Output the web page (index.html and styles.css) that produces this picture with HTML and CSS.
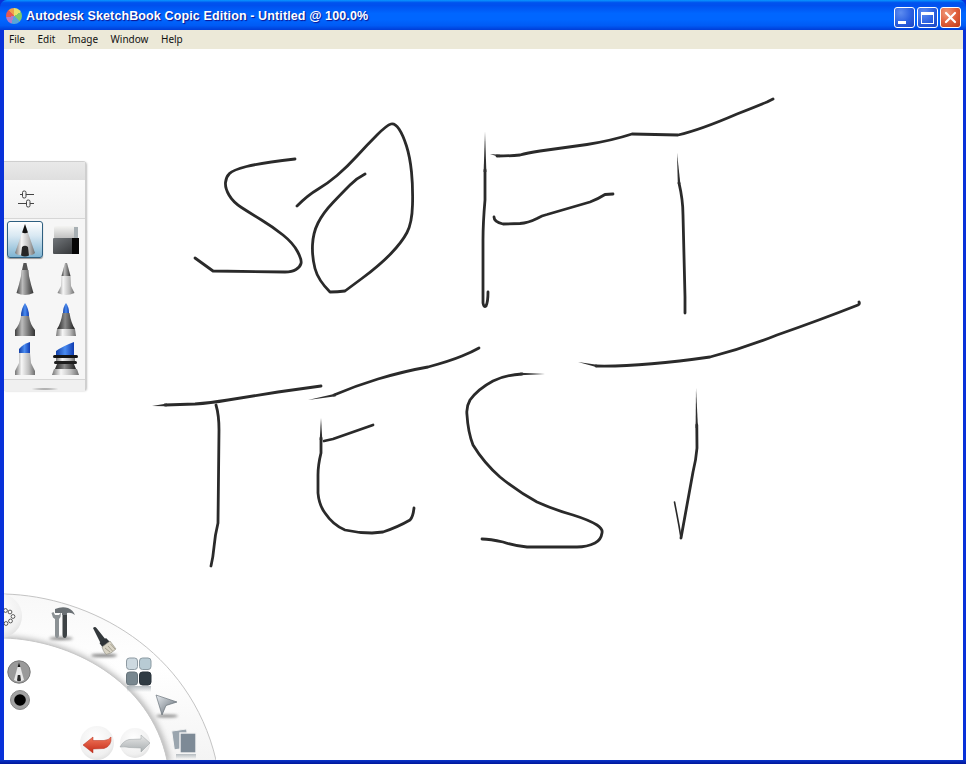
FILE: index.html
```html
<!DOCTYPE html>
<html lang="en">
<head>
<meta charset="utf-8">
<title>Autodesk SketchBook Copic Edition</title>
<link rel="stylesheet" href="styles.css">
</head>
<body>
<svg class="defs" width="0" height="0" aria-hidden="true">
  <defs>
    <linearGradient id="metal" x1="0" x2="1" y1="0" y2="0"><stop offset="0" stop-color="#3e3e3e"/><stop offset=".35" stop-color="#bcbcbc"/><stop offset=".7" stop-color="#707070"/><stop offset="1" stop-color="#333"/></linearGradient>
    <linearGradient id="silver" x1="0" x2="1" y1="0" y2="0"><stop offset="0" stop-color="#757575"/><stop offset=".33" stop-color="#f6f6f6"/><stop offset=".7" stop-color="#bcbcbc"/><stop offset="1" stop-color="#6e6e6e"/></linearGradient>
    <linearGradient id="dark" x1="0" x2="1" y1="0" y2="0"><stop offset="0" stop-color="#222"/><stop offset=".45" stop-color="#8a8a8a"/><stop offset="1" stop-color="#1e1e1e"/></linearGradient>
    <linearGradient id="blue" x1="0" x2="1" y1="0" y2="0"><stop offset="0" stop-color="#123fa8"/><stop offset=".5" stop-color="#4a8cf0"/><stop offset="1" stop-color="#0e3ab0"/></linearGradient>
    <linearGradient id="erTop" x1="0" x2="0" y1="0" y2="1"><stop offset="0" stop-color="#f4f4f2"/><stop offset="1" stop-color="#bdbdbd"/></linearGradient>
    <linearGradient id="erBot" x1="0" x2="1" y1="0" y2="1"><stop offset="0" stop-color="#72767a"/><stop offset="1" stop-color="#2c2e30"/></linearGradient>
    <linearGradient id="band" x1="0" x2="0" y1="0" y2="1"><stop offset="0" stop-color="#f8f8f8"/><stop offset=".45" stop-color="#ffffff"/><stop offset="1" stop-color="#f4f4f4"/></linearGradient>
    <linearGradient id="red" x1="0" x2="0" y1="0" y2="1"><stop offset="0" stop-color="#f0765a"/><stop offset="1" stop-color="#c42a18"/></linearGradient>
    <linearGradient id="grayArrow" x1="0" x2="0" y1="0" y2="1"><stop offset="0" stop-color="#e8e8e8"/><stop offset="1" stop-color="#a8aeb0"/></linearGradient>
    <radialGradient id="ball" cx=".45" cy=".35" r=".75"><stop offset="0" stop-color="#ffffff"/><stop offset=".7" stop-color="#f0f0f0"/><stop offset="1" stop-color="#d8d8d8"/></radialGradient>
    <linearGradient id="cursor" x1="0" x2="1" y1="0" y2="1"><stop offset="0" stop-color="#e8ecf0"/><stop offset="1" stop-color="#59636c"/></linearGradient>
    <linearGradient id="fade" x1="0" x2="0" y1="0" y2="1"><stop offset="0" stop-color="#9aa4aa" stop-opacity=".7"/><stop offset="1" stop-color="#9aa4aa" stop-opacity="0"/></linearGradient>
    <filter id="soft" x="-20%" y="-20%" width="140%" height="140%"><feGaussianBlur stdDeviation="3"/></filter>
    <filter id="softer" x="-50%" y="-200%" width="200%" height="500%"><feGaussianBlur stdDeviation="1.5"/></filter>
  </defs>
</svg>

<div class="window">
  <header class="titlebar">
    <span class="app-icon"></span>
    <span class="title-text">Autodesk SketchBook Copic Edition - Untitled @ 100.0%</span>
    <div class="win-buttons">
      <button class="win-btn"><span class="glyph-min"></span></button>
      <button class="win-btn"><span class="glyph-max"></span></button>
      <button class="win-btn win-close">
        <svg width="13" height="13" viewBox="0 0 13 13"><path class="glyph-x" d="M2 2 L11 11 M11 2 L2 11"/></svg>
      </button>
    </div>
  </header>
  <nav class="menubar">
    <span class="menu-item">File</span>
    <span class="menu-item">Edit</span>
    <span class="menu-item">Image</span>
    <span class="menu-item">Window</span>
    <span class="menu-item">Help</span>
  </nav>

  <main class="canvas">
    <svg class="drawing" viewBox="4 49 959 711" width="959" height="711">
      <g class="ink">
        <path d="M295 159 Q260 163 246.5 166.5 Q233 170 229.5 173.5 Q226 177 225.5 182.5 Q225 188 229 195 Q233 202 241.5 207.5 Q250 213 261.5 220 Q273 227 283 235 Q293 243 297.5 251.5 Q302 260 301 263.5 Q300 267 296 269.5 Q292 272 285 272 L213 271 L195 258"/>
        <path d="M297 206 Q308 195 317.5 189.5 Q327 184 337 175.5 Q347 167 357 156 Q367 145 377 135 Q387 125 391 124 Q395 123 399 129 Q403 135 406.5 146 Q410 157 411.5 172 Q413 187 412.5 205 Q412 223 407 232.5 Q402 242 391 253.5 Q380 265 362.5 278 L345 291 Q337.5 292 330 292 Q318 280 315 268.5 Q312 257 312.5 245 Q313 233 318 223 Q323 213 333 202.5 Q343 192 350 185 Q357 178 365 174"/>
        <path d="M485 170 L485 200 Q483 223 483 240 L483 303 Q484 308 486 306 Q488 302 488 292"/>
        <path d="M497 156 Q510 156 520 155 Q527 153 540 151 L587 144.5 Q612 140.5 632 134 L678 135 Q700 130 737 114 Q755 107 767 102 L773 99"/>
        <path d="M494 217 Q494 222 503 224 L520 223.5 Q528 223 537 218.5 Q542 215.5 547 214.5 L590 202 Q598 199 605 194.5 L613 194"/>
        <path d="M679 183 Q683 200 683 215 L685 297 L685 313"/>
        <path d="M165 405 L195 404 Q210 403 228 400 L278 392 L321 386"/>
        <path d="M216 405 Q219 415 219 430 L218 523 Q215 535 214 547 Q213 558 211 566"/>
        <path d="M334 395 Q355 386 378 379 Q405 371 428 367 Q450 361 462 356 Q472 352 479 348"/>
        <path d="M321 438 L321 453 Q318 465 318 475 L318 493 Q319 505 325 513 Q333 525 345 530 Q358 533 372 533 L383 532 Q398 527 410 520 Q413 517 414 508"/>
        <path d="M324 441 L333 439 L373 425"/>
        <path d="M596 366 Q640 367 710 357 Q745 348 777 335 Q820 320 858 305 Q860 304 859 302"/>
        <path d="M522 374 Q505 375 493 381 Q478 389 470 400 Q466 407 467 415 Q468 432 473 445 Q484 463 500 477 Q517 491 537 502 Q555 510 573 515 Q589 520 597 525 Q603 529 602 533 Q601 540 595 543 Q587 547 577 547 L527 547 Q515 546 503 542 Q490 539 482 539"/>
        <path d="M696.8 425 L697 448 Q696 460 693 472 L681 538"/>
        <path class="ink-thin" d="M681 538 Q679 525 677 515 L674.5 502"/>
      </g>
      <g class="ink-tip">
        <path d="M485 132 L486.4 172 L483.6 172Z"/>
        <path d="M490 154 L500 154.8 L500 157.2Z"/>
        <path d="M677 153 L680.4 184 L677.8 184Z"/>
        <path d="M152 406 L167 403.6 L167 406.2Z"/>
        <path d="M308 400 L335 393.8 L336 396.2Z"/>
        <path d="M321 418 L322.3 440 L319.7 440Z"/>
        <path d="M578 362 L597 364.8 L597 367.2Z"/>
        <path d="M545 374 L520 372.8 L520 375.3Z"/>
        <path d="M696 388 L698 428 L695.6 428Z"/>
      </g>
    </svg>

    <aside class="tool-panel">
      <div class="panel-head"></div>
      <div class="panel-settings">
        <svg width="20" height="18" viewBox="0 0 20 18">
          <path class="slider-line" d="M4 4.5 H18 M2 13.5 H18"/>
          <rect class="slider-knob" x="6.5" y="1" width="3.5" height="7" rx="1.5"/>
          <rect class="slider-knob" x="10.5" y="10" width="3.5" height="7" rx="1.5"/>
        </svg>
      </div>
      <div class="tool-grid">
        <div class="tool selected">
          <svg width="30" height="36" viewBox="0 0 30 36">
            <path fill="url(#silver)" d="M15 2 L25 31 Q22 34 20 32.5 Q17.5 35 15 33 Q12.5 35 10 32.5 Q8 34 5 31Z"/>
            <path fill="#111" d="M15 2 L17.9 10.5 Q15 12 12.1 10.5Z"/>
            <path fill="#262626" d="M11 33.5 L12 25 Q15 22.5 18 25 L19 33.5 Q15 35.5 11 33.5Z"/>
          </svg>
        </div>
        <div class="tool">
          <svg width="28" height="32" viewBox="0 0 28 32">
            <rect fill="url(#erTop)" x="2" y="1" width="24" height="13" rx="2"/>
            <rect fill="#a8b0b4" x="22" y="2" width="4" height="12"/>
            <rect fill="url(#erBot)" x="1" y="13" width="26" height="16" rx="1"/>
            <rect fill="#060606" x="20" y="13" width="7" height="16"/>
          </svg>
        </div>
        <div class="tool">
          <svg width="24" height="36" viewBox="0 0 24 36">
            <path fill="#555" d="M10.5 1 L13.5 1 L15 8 L9 8Z"/>
            <path fill="url(#metal)" d="M8.5 8 L15.5 8 L16 14 Q18 23 20.5 31 Q12 35 3.5 31 Q6 23 8 14Z"/>
          </svg>
        </div>
        <div class="tool">
          <svg width="24" height="36" viewBox="0 0 24 36">
            <path fill="url(#metal)" d="M11 1 L13 1 L16.5 14 L7.5 14Z"/>
            <path fill="url(#silver)" d="M7.5 14 L16.5 14 L17 24 Q19 28 20.5 31 Q12 35 3.5 31 Q5 28 7 24Z"/>
          </svg>
        </div>
        <div class="tool">
          <svg width="24" height="36" viewBox="0 0 24 36">
            <path fill="url(#blue)" d="M12 1 Q16 7 16 14 L8 14 Q8 7 12 1Z"/>
            <path fill="url(#metal)" d="M8 14 L16 14 Q17 22 22 28 L22 34 L2 34 L2 28 Q7 22 8 14Z"/>
          </svg>
        </div>
        <div class="tool">
          <svg width="24" height="36" viewBox="0 0 24 36">
            <path fill="url(#blue)" d="M12 1 Q15 5 15 11 L9 11 Q9 5 12 1Z"/>
            <path fill="url(#dark)" d="M8.5 11 L15.5 11 Q17 21 21 27 L3 27 Q7 21 8.5 11Z"/>
            <path fill="url(#silver)" d="M3 27 L21 27 L22 34 L2 34Z"/>
          </svg>
        </div>
        <div class="tool">
          <svg width="24" height="36" viewBox="0 0 24 36">
            <path fill="url(#blue)" d="M6 8 Q10 3 17 1 L17 12 L6 12Z"/>
            <path fill="url(#silver)" d="M6 12 L17 12 L18 22 L22 30 L22 34 L2 34 L2 30 L6 22Z"/>
          </svg>
        </div>
        <div class="tool">
          <svg width="30" height="36" viewBox="0 0 30 36">
            <path fill="url(#blue)" d="M5 10 Q12 5 23 1 L23 14 L5 14Z"/>
            <rect fill="#141414" x="2" y="14" width="25" height="3" rx="1.5"/>
            <path fill="url(#silver)" d="M5 17 L24 17 L24 20 L5 20Z"/>
            <rect fill="#1e1e1e" x="3" y="20" width="23" height="3" rx="1.5"/>
            <path fill="url(#dark)" d="M6 23 L23 23 L25 28 L4 28Z"/>
            <path fill="url(#silver)" d="M3 28 L26 28 L28 34 L1 34Z"/>
          </svg>
        </div>
      </div>
      <div class="panel-foot"><span class="grip"></span></div>
    </aside>

    <svg class="wheel" viewBox="4 590 212 170" width="212" height="170">
      <path fill="url(#band)" d="M4 594 C90 596 190 650 216 760 L167 760 C150 680 70 640 4 638Z"/>
      <clipPath id="bandClip"><path d="M4 594 C90 596 190 650 216 760 L167 760 C150 680 70 640 4 638Z"/></clipPath>
      <g clip-path="url(#bandClip)">
        <path class="wheel-shade" filter="url(#soft)" d="M4 640 C70 642 150 682 167 762"/>
      </g>
      <path class="wheel-edge" d="M4 594 C90 596 190 650 216 760"/>
      <path class="wheel-inner" d="M4 638 C70 640 150 680 167 760"/>

      <!-- layers button -->
      <circle fill="url(#ball)" cx="0" cy="616" r="22"/>
      <g class="ring-dots">
        <circle cx="5.5" cy="610.5" r="1.9"/><circle cx="10" cy="612" r="1.9"/><circle cx="13" cy="616.5" r="1.9"/>
        <circle cx="10.5" cy="621" r="1.9"/><circle cx="6" cy="623.5" r="1.9"/>
      </g>

      <!-- tools -->
      <ellipse class="shadow" cx="61" cy="638.5" rx="12" ry="1.5" filter="url(#softer)"/>
      <path fill="#6a7074" d="M55 613 L55 609 Q62 606 68 608 Q73 610 75 615 Q71 612 67 613 L67 615 L62 615 L62 613Z"/>
      <path fill="#3d4245" d="M62.5 615 L67 615 L67 634 Q67 638 64.8 638 Q62.5 638 62.5 634Z"/>
      <path fill="#8b9194" d="M51.5 613 L53 617.5 L55 619 L55 635 Q55 638 57 638 Q59 638 59 635 L59 619 L60.5 617 L61 612.5 L59 615 L55 615 L53.5 612Z"/>
      <!-- brush -->
      <ellipse class="shadow" cx="104" cy="655.5" rx="13" ry="1.6" filter="url(#softer)"/>
      <path fill="#33383b" d="M93 628 Q95 626 96.5 628 L106 640 L101 644Z"/>
      <path fill="#2f3438" d="M99.5 643 L106 638 L110 642 L103 648Z"/>
      <path fill="#d8d3c4" stroke="#8a8a80" stroke-width=".6" d="M102 647 L110 641 L116 649 Q111 654 106 654.5 Q103 651 102 647Z"/>
      <path class="bristle" d="M105 648 L110 652 M108 646 L112.5 651 M110.5 644 L115 649"/>

      <!-- colours -->
      <g>
        <rect fill="#cdd9e0" stroke="#8e9aa2" x="126.5" y="658" width="11" height="11.5" rx="3"/>
        <rect fill="#b8cbd4" stroke="#8b9aa2" x="139.5" y="658" width="11.5" height="11.5" rx="3"/>
        <rect fill="#78878f" stroke="#66737a" x="126.5" y="672" width="11" height="13" rx="3"/>
        <rect fill="#303c44" stroke="#28323a" x="139.5" y="672" width="11.5" height="13" rx="3"/>
        <rect fill="url(#fade)" x="127" y="686" width="24" height="6"/>
      </g>

      <!-- cursor -->
      <ellipse class="shadow" cx="167" cy="716" rx="11" ry="1.3" filter="url(#softer)"/>
      <path fill="url(#cursor)" stroke="#59636c" stroke-width=".6" d="M156 695 L177 702 L166 705.5 L162 715Z"/>

      <!-- pages -->
      <rect fill="#9aa5ae" stroke="#f4f4f4" x="173" y="730" width="15" height="19" transform="rotate(-8 180 740)"/>
      <rect fill="#7d8a96" stroke="#f4f4f4" stroke-width="1.4" x="180" y="733" width="16" height="20"/>
      <rect fill="url(#fade)" x="176" y="754" width="20" height="5"/>

      <!-- undo / redo -->
      <circle fill="url(#ball)" cx="97" cy="743" r="17"/>
      <path fill="url(#red)" stroke="#b52c1c" stroke-width=".5" d="M83 745 L93 737 L93 740.5 L104 740.5 Q109 740 111 737 Q112 746 104 748.5 L93 749 L93 753Z"/>
      <circle fill="url(#ball)" cx="135" cy="743" r="15"/>
      <path fill="url(#grayArrow)" stroke="#9aa0a2" stroke-width=".5" d="M150 743 L141 735 L141 739 L129 739.5 Q123 741 120 747 Q125 746.5 129 747.5 L141 748 L141 752Z"/>

      <!-- current brush and size -->
      <circle fill="#9a9a9a" stroke="#7a7a7a" cx="19" cy="672" r="11.2"/>
      <path fill="#e8e8e8" d="M19 662 L24 680 Q19 683 14 680Z"/>
      <path fill="#111" d="M19 662 L20.4 667 L17.6 667Z"/>
      <path fill="#2a2a2a" d="M17 680.5 L17.8 675 L20.2 675 L21 680.5 Q19 682 17 680.5Z"/>
      <circle fill="#a2a2a2" stroke="#8a8a8a" cx="20" cy="700" r="9.5"/>
      <circle fill="#000" cx="20" cy="700" r="5.8"/>
    </svg>
  </main>
</div>
</body>
</html>
```

FILE: styles.css
```css
* { box-sizing: border-box; }
html, body { margin: 0; padding: 0; height: 100%; overflow: hidden; background: #0831d9; }
.defs { position: absolute; }

.window {
  width: 966px;
  height: 764px;
  display: flex;
  flex-direction: column;
  background: linear-gradient(0deg, #00159a 0, #0a34c8 4px, #0831d9 5px);
  padding: 0 3px 4px 4px;
  border-radius: 7px 7px 0 0;
  position: relative;
}

.titlebar {
  height: 30px;
  margin: 0 -3px 0 -4px;
  padding: 2px 5px 0 6px;
  flex: none;
  display: flex;
  align-items: center;
  border-radius: 7px 7px 0 0;
  background: linear-gradient(180deg, #0997ff 0, #0053ee 9%, #0050ee 18%, #0066ff 45%, #0066ff 65%, #005bf5 85%, #003dd7 100%);
}
.app-icon {
  width: 16px;
  height: 16px;
  border-radius: 50%;
  flex: none;
  background: conic-gradient(#e9e06a 0 60deg, #7ecb6a 60deg 130deg, #58a6d8 130deg 200deg, #b47ac8 200deg 260deg, #e85a50 260deg 320deg, #eea04c 320deg 360deg);
}
.title-text {
  margin-left: 4px;
  font-family: "Liberation Sans", Arial, sans-serif;
  font-weight: 700;
  font-size: 12.5px;
  letter-spacing: .12px;
  color: #fff;
  text-shadow: 1px 1px 1px #0f1089;
  white-space: nowrap;
}
.win-buttons { margin-left: auto; display: flex; gap: 2px; margin-top: 3px; }
.win-btn {
  width: 21px;
  height: 21px;
  padding: 0;
  border: 1px solid #fff;
  border-radius: 3px;
  background: radial-gradient(circle at 30% 25%, #5d8cf0 0, #2a5fe0 55%, #1c44c0 100%);
  display: flex;
  align-items: center;
  justify-content: center;
  position: relative;
}
.win-close { background: radial-gradient(circle at 30% 25%, #f09a7c 0, #e0603c 50%, #c03a18 100%); }
.glyph-min { width: 8px; height: 3px; background: #fff; margin: 9px 6px 0 0; }
.glyph-max { width: 13px; height: 12px; border: 1px solid #fff; border-top-width: 3px; }
.glyph-x { stroke: #fff; stroke-width: 2.2; fill: none; stroke-linecap: round; }

.menubar {
  height: 19px;
  flex: none;
  background: #ece9d8;
  display: flex;
  align-items: center;
  padding: 0 0 2px 5px;
  gap: 12.5px;
  font-family: "Noto Sans", "Liberation Sans", sans-serif;
  font-size: 10px;
  color: #111;
}

.canvas { flex: 1; position: relative; background: #fff; overflow: hidden; }
.drawing { display: block; }
.ink path { fill: none; stroke: #2a2a2a; stroke-width: 2.8; stroke-linecap: round; stroke-linejoin: round; }
.ink .ink-thin { stroke-width: 1.6; }
.ink-tip path { fill: #2f2f2f; }

.tool-panel {
  position: absolute;
  left: 0;
  top: 112px;
  width: 82px;
  height: 229px;
  display: flex;
  flex-direction: column;
  background: #f6f6f6;
  border: 1px solid #cfcfcf;
  border-left: 0;
  border-radius: 0 3px 3px 0;
  box-shadow: 1px 1px 2px rgba(0,0,0,.25);
}
.panel-head { height: 18px; flex: none; background: linear-gradient(#e9e9e9, #dfdfdf); }
.panel-settings {
  height: 39px;
  flex: none;
  display: flex;
  align-items: center;
  padding-left: 12px;
  border-bottom: 1px solid #d6d6d6;
  background: linear-gradient(#fafafa, #f1f1f1);
}
.slider-line { stroke: #444; stroke-width: 1; fill: none; }
.slider-knob { fill: #f4f4f4; stroke: #444; stroke-width: 1; }
.tool-grid {
  flex: 1;
  display: grid;
  grid-template-columns: 36px 38px;
  grid-auto-rows: 39.5px;
  column-gap: 4px;
  padding: 2px 0 0 3px;
}
.tool { display: flex; align-items: center; justify-content: center; }
.tool.selected {
  border: 1px solid #2e5f80;
  border-radius: 3px;
  height: 37px;
  width: 36px;
  background: linear-gradient(#ffffff 0, #d8e8f2 40%, #7fb4d2 100%);
  box-shadow: 0 1px 1px rgba(0,0,0,.4);
}
.panel-foot {
  height: 12px;
  flex: none;
  border-top: 1px solid #d6d6d6;
  display: flex;
  justify-content: center;
  align-items: flex-end;
  background: #f0f0f0;
}
.grip { width: 30px; height: 2px; margin-bottom: 1px; background: radial-gradient(ellipse at center, #777 0, rgba(120,120,120,0) 72%); }

.wheel { position: absolute; left: 0; bottom: 0; display: block; }
.wheel-edge { fill: none; stroke: #c4c4c4; stroke-width: 1; }
.wheel-inner { fill: none; stroke: #c8c8c8; stroke-width: 1; }
.wheel-shade { fill: none; stroke: #a8a8a8; stroke-width: 6; }
.ring-dots circle { fill: #fff; stroke: #333; stroke-width: .8; }
.bristle { fill: none; stroke: #8f8a7a; stroke-width: .7; }
.shadow { fill: #777; }
```
